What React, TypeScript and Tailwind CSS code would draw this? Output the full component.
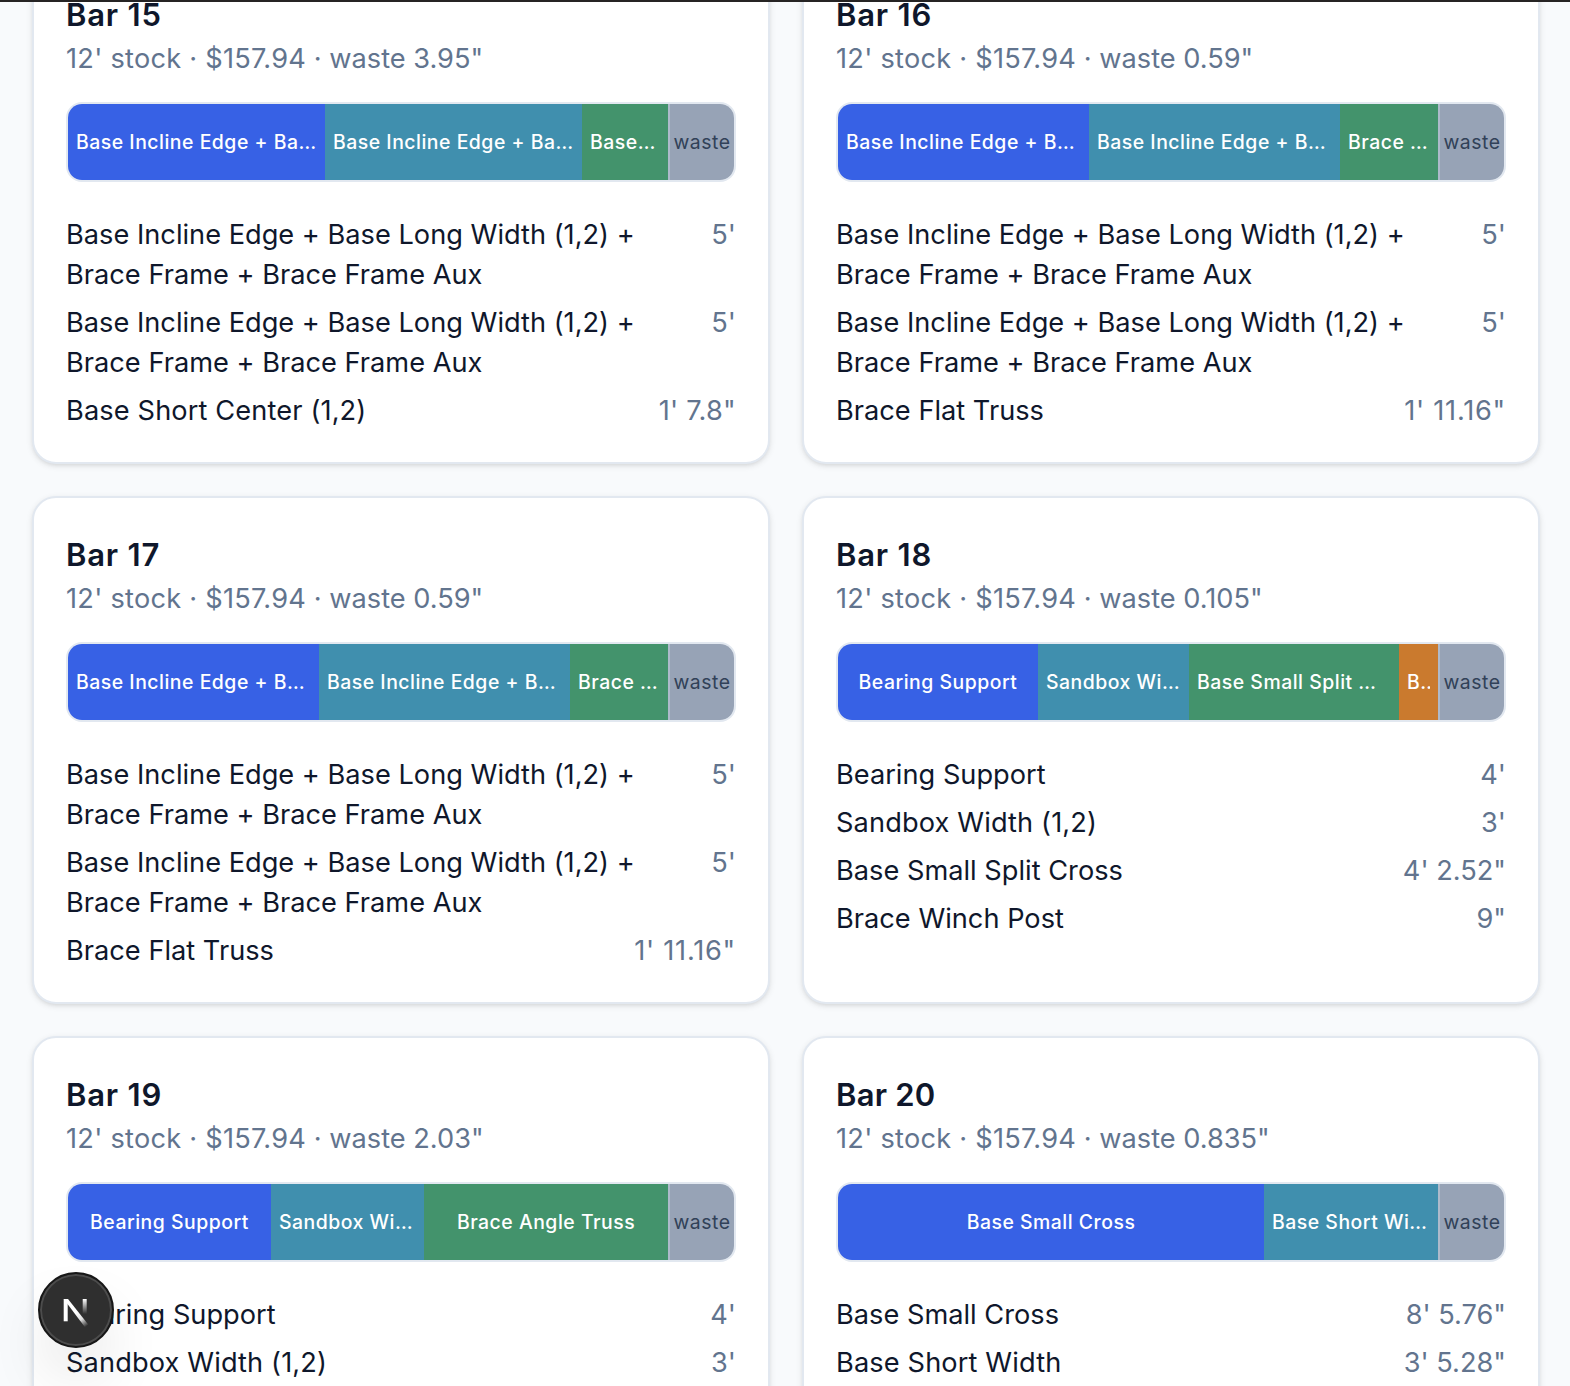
type Segment = {
  label: string;
  width: number;
  color: string;
};

type Cut = {
  name: string;
  length: string;
};

type Bar = {
  id: number;
  waste: string;
  segments: Segment[];
  cuts: Cut[];
};

const BLUE = 'bg-[#3761e5]';
const TEAL = 'bg-[#408fae]';
const GREEN = 'bg-[#43936c]';
const ORANGE = 'bg-[#ca7a2e]';

const INCLINE = 'Base Incline Edge + Base Long Width (1,2) + Brace Frame + Brace Frame Aux';

const bars: Bar[] = [
  {
    id: 15,
    waste: '3.95"',
    segments: [
      { label: INCLINE, width: 257, color: BLUE },
      { label: INCLINE, width: 257, color: TEAL },
      { label: 'Base Short Center (1,2)', width: 86, color: GREEN },
    ],
    cuts: [
      { name: INCLINE, length: "5'" },
      { name: INCLINE, length: "5'" },
      { name: 'Base Short Center (1,2)', length: '1\' 7.8"' },
    ],
  },
  {
    id: 16,
    waste: '0.59"',
    segments: [
      { label: INCLINE, width: 251, color: BLUE },
      { label: INCLINE, width: 251, color: TEAL },
      { label: 'Brace Flat Truss', width: 98, color: GREEN },
    ],
    cuts: [
      { name: INCLINE, length: "5'" },
      { name: INCLINE, length: "5'" },
      { name: 'Brace Flat Truss', length: '1\' 11.16"' },
    ],
  },
  {
    id: 17,
    waste: '0.59"',
    segments: [
      { label: INCLINE, width: 251, color: BLUE },
      { label: INCLINE, width: 251, color: TEAL },
      { label: 'Brace Flat Truss', width: 98, color: GREEN },
    ],
    cuts: [
      { name: INCLINE, length: "5'" },
      { name: INCLINE, length: "5'" },
      { name: 'Brace Flat Truss', length: '1\' 11.16"' },
    ],
  },
  {
    id: 18,
    waste: '0.105"',
    segments: [
      { label: 'Bearing Support', width: 200, color: BLUE },
      { label: 'Sandbox Width (1,2)', width: 151, color: TEAL },
      { label: 'Base Small Split Cross', width: 210, color: `${GREEN} pr-3` },
      { label: 'Brace Winch Post', width: 39, color: ORANGE },
    ],
    cuts: [
      { name: 'Bearing Support', length: "4'" },
      { name: 'Sandbox Width (1,2)', length: "3'" },
      { name: 'Base Small Split Cross', length: '4\' 2.52"' },
      { name: 'Brace Winch Post', length: '9"' },
    ],
  },
  {
    id: 19,
    waste: '2.03"',
    segments: [
      { label: 'Bearing Support', width: 203, color: BLUE },
      { label: 'Sandbox Width (1,2)', width: 153, color: TEAL },
      { label: 'Brace Angle Truss', width: 244, color: GREEN },
    ],
    cuts: [
      { name: 'Bearing Support', length: "4'" },
      { name: 'Sandbox Width (1,2)', length: "3'" },
      { name: 'Brace Angle Truss', length: '4\' 9.72"' },
    ],
  },
  {
    id: 20,
    waste: '0.835"',
    segments: [
      { label: 'Base Small Cross', width: 426, color: BLUE },
      { label: 'Base Short Width', width: 174, color: TEAL },
    ],
    cuts: [
      { name: 'Base Small Cross', length: '8\' 5.76"' },
      { name: 'Base Short Width', length: '3\' 5.28"' },
    ],
  },
];

function nameTracking(name: string) {
  return name !== INCLINE && /Short|Width/.test(name) ? 'tracking-[0.13px]' : 'tracking-[0.01px]';
}

function lengthTracking(length: string) {
  if (length.includes('11')) return 'tracking-[0.75px]';
  return length.startsWith('1') ? 'tracking-[0.25px]' : 'tracking-normal';
}

function StockBar({ segments }: { segments: Segment[] }) {
  return (
    <div className="mt-[23px] flex h-20 overflow-hidden rounded-2xl border-2 border-slate-200 text-[19.4px] tracking-[0.52px]">
      {segments.map((segment, i) => (
        <div
          key={i}
          className={`flex shrink-0 items-center justify-center px-2 pt-0.5 font-medium text-white ${segment.color}`}
          style={{ width: segment.width }}
        >
          <span className="truncate">{segment.label}</span>
        </div>
      ))}
      <div className="flex flex-1 items-center justify-center border-l-2 border-[#aebacb] bg-[#97a3b6] pt-0.5 text-slate-700">
        waste
      </div>
    </div>
  );
}

function BarCard({ bar }: { bar: Bar }) {
  return (
    <div className="rounded-3xl border-2 border-slate-200 bg-white px-8 pt-[33px] pb-[31px] shadow-[0_2px_6px_rgba(0,0,0,0.1),0_2px_4px_-2px_rgba(0,0,0,0.1)]">
      <h3
        className={`text-[31px] leading-[48px] font-semibold ${bar.id < 20 ? 'tracking-[0.8px]' : 'tracking-[0.2px]'}`}
      >
        Bar {bar.id}
      </h3>
      <p className="text-[27.2px] leading-10 tracking-[0.25px] text-slate-500">
        12' stock · $157.94<span className="tracking-normal"> · waste {bar.waste}</span>
      </p>
      <StockBar segments={bar.segments} />
      <ul className="mt-[33px] space-y-2 text-[27.2px] leading-10">
        {bar.cuts.map((cut, i) => (
          <li key={i} className="flex justify-between gap-8">
            <span className={nameTracking(cut.name)}>{cut.name}</span>
            <span className={`shrink-0 text-slate-500 ${lengthTracking(cut.length)}`}>{cut.length}</span>
          </li>
        ))}
      </ul>
    </div>
  );
}

function DevBadge() {
  return (
    <div className="absolute top-[1272px] left-[38px] flex size-[76px] items-center justify-center rounded-full border-2 border-[#171717] bg-[#2f2f2f] shadow-[inset_0_0_0_2px_#4c4c4c,0_32px_64px_-16px_rgba(0,0,0,0.24)]">
      <svg className="overflow-visible" width="28" height="32" viewBox="0 0 28 32" fill="none">
        <defs>
          <linearGradient id="diag" x1="15" y1="18" x2="25" y2="32" gradientUnits="userSpaceOnUse">
            <stop stopColor="#fff" />
            <stop offset="0.5" stopColor="#fff" stopOpacity="0.85" />
            <stop offset="1" stopColor="#fff" stopOpacity="0" />
          </linearGradient>
          <linearGradient id="stem" x1="23" y1="5" x2="23" y2="20" gradientUnits="userSpaceOnUse">
            <stop stopColor="#fff" />
            <stop offset="1" stopColor="#fff" stopOpacity="0" />
          </linearGradient>
        </defs>
        <path d="M1.7 5H5.7V27.3H1.7z" fill="#fff" />
        <path d="M1.7 5H6L26.2 30.6L23 33.2z" fill="url(#diag)" />
        <path d="M20.7 5H24.7V20H20.7z" fill="url(#stem)" />
      </svg>
    </div>
  );
}

export default function App() {
  return (
    <div className="relative h-[1386px] w-[1570px] overflow-hidden bg-slate-50 font-['Inter',sans-serif] text-slate-900">
      <div className="-mt-11 grid grid-cols-2 gap-8 pr-[30px] pl-8">
        {bars.map((bar) => (
          <BarCard key={bar.id} bar={bar} />
        ))}
      </div>
      <div className="absolute inset-x-0 top-0 h-0.5 bg-[#262424]" />
      <DevBadge />
    </div>
  );
}
